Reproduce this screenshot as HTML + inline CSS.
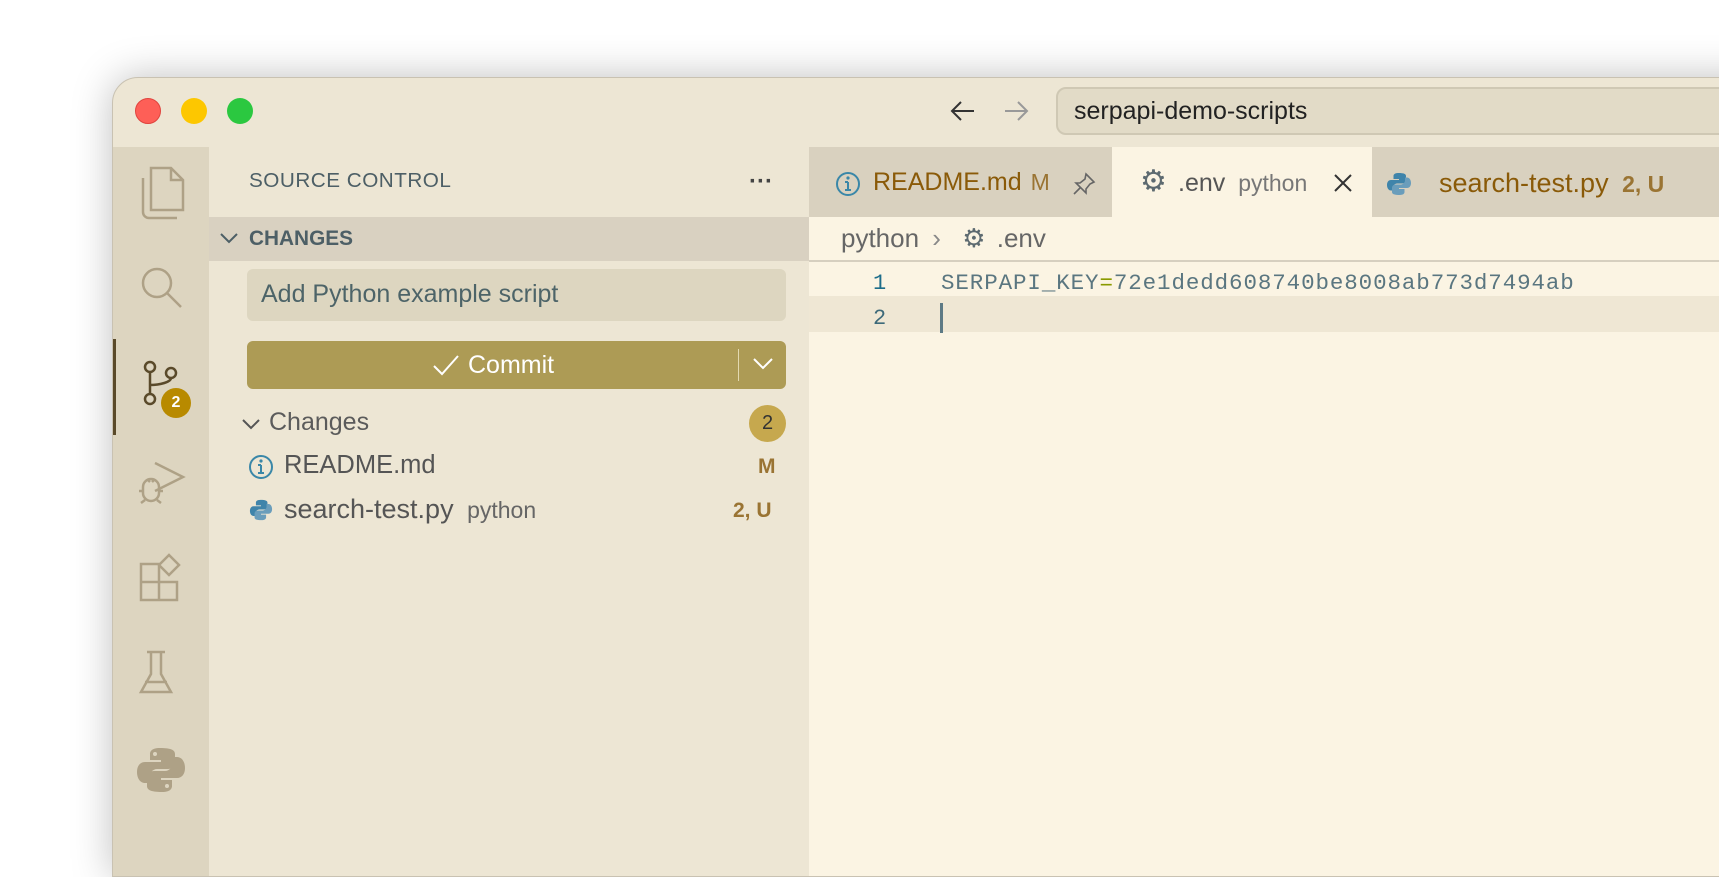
<!DOCTYPE html>
<html><head><meta charset="utf-8"><style>
*{margin:0;padding:0;box-sizing:border-box}
body{width:1719px;height:842px;background:#fff;overflow:hidden;font-family:"Liberation Sans",sans-serif;position:relative}
.win{position:absolute;left:112px;top:77px;width:1700px;height:800px;background:#ede6d4;border-radius:26px 0 0 0;box-shadow:0 0 40px rgba(0,0,0,.25);border:1px solid #c9c2b2;overflow:hidden}
.a{position:absolute;white-space:nowrap}
.dot{position:absolute;top:20px;width:26px;height:26px;border-radius:50%}
</style></head><body>
<div class="win">
 <div class="dot" style="left:22px;background:#fe5f57;border:1px solid #e0443e"></div>
 <div class="dot" style="left:68px;background:#fdc700"></div>
 <div class="dot" style="left:114px;background:#2bc840"></div>
 <svg class="a" style="left:835px;top:20px" width="30" height="26" viewBox="0 0 30 26"><path d="M26 13H4M13 4L4 13l9 9" stroke="#333" stroke-width="2" fill="none"/></svg>
 <svg class="a" style="left:888px;top:20px" width="30" height="26" viewBox="0 0 30 26"><path d="M4 13h22M17 4l9 9-9 9" stroke="#999" stroke-width="2" fill="none"/></svg>
 <div class="a" style="left:943px;top:9px;width:800px;height:48px;background:#e2dbc7;border:2px solid #cfc8b4;border-radius:10px;font-size:25px;color:#222;padding:8px 16px">serpapi-demo-scripts</div>
 <div class="a" style="left:0;top:69px;width:96px;height:740px;background:#ddd5c0"></div>
 <div class="a" style="left:0;top:261px;width:3px;height:96px;background:#5a4a2a"></div>
 <svg class="a" style="left:0;top:69px" width="96" height="680" viewBox="0 0 96 680" fill="none" stroke="#aea186" stroke-width="2.5">
  <path d="M38 21h20l12 12v30H38zM58 21v12h12M30 31v34a6 6 0 0 0 6 6h28"/>
  <circle cx="44" cy="136" r="14"/><path d="M54 146l14 14"/>
  <g stroke="#5a4a2a"><circle cx="37" cy="220" r="5"/><circle cx="58" cy="226" r="5"/><circle cx="37" cy="252" r="5"/><path d="M37 225v22M37 238c10 0 21-3 21-7"/></g>
  <path d="M42 316l28 14-28 14M30 340a8 8 0 0 1 16 0v6a8 8 0 0 1-16 0zM26 344h4M46 344h4M28 356l4-3M48 356l-4-3M34 332l3 3M42 332l-3 3"/>
  <path d="M28 417h18v18H28zM28 435h18v18H28zM46 435h18v18H46zM56 408l10 10-10 10-10-10z"/>
  <path d="M34 505h18M38 505v22l-10 18h30l-10-18v-22M32 535h22"/>
 </svg>
 <svg class="a" style="left:22px;top:666px" width="52" height="52" viewBox="0 0 52 52"><path fill="#aea186" d="M25 4c-9 0-10 4-10 6v6h11v2H10c-5 0-8 4-8 10s3 11 8 11h4v-6c0-4 4-8 8-8h11c4 0 7-3 7-7v-8c0-4-4-6-15-6zm-5 4a2 2 0 1 1 0 4 2 2 0 0 1 0-4zM27 48c9 0 10-4 10-6v-6H26v-2h16c5 0 8-4 8-10s-3-11-8-11h-4v6c0 4-4 8-8 8H19c-4 0-7 3-7 7v8c0 4 4 6 15 6zm5-4a2 2 0 1 1 0-4 2 2 0 0 1 0 4z"/></svg>
 <div class="a" style="left:48px;top:310px;width:30px;height:30px;border-radius:50%;background:#b88a00;color:#fff;font-size:16px;font-weight:bold;text-align:center;line-height:30px">2</div>
 <div class="a" style="left:136px;top:91px;font-size:20.7px;color:#4d5f66;letter-spacing:.5px">SOURCE CONTROL</div>
 <div class="a" style="left:636px;top:90px;font-size:24px;font-weight:bold;color:#444">···</div>
 <div class="a" style="left:96px;top:139px;width:600px;height:44px;background:#d9d1c1"></div>
 <svg class="a" style="left:106px;top:153px" width="20" height="14"><path d="M2 3l8 8 8-8" stroke="#4d5f66" stroke-width="2" fill="none"/></svg>
 <div class="a" style="left:136px;top:149px;font-size:20.8px;font-weight:bold;color:#4d5f66">CHANGES</div>
 <div class="a" style="left:134px;top:191px;width:539px;height:52px;background:#ddd6c0;border-radius:6px;font-size:25px;color:#4d6468;padding:11px 14px">Add Python example script</div>
 <div class="a" style="left:134px;top:263px;width:539px;height:48px;background:#ad9b55;border-radius:6px;color:#fff;font-size:25px">
  <svg class="a" style="left:185px;top:13px" width="28" height="22"><path d="M2 12l8 8L26 2" stroke="#fff" stroke-width="2" fill="none"/></svg>
  <div class="a" style="left:221px;top:10px">Commit</div>
  <div class="a" style="left:491px;top:8px;width:1px;height:32px;background:#e3d9b0"></div>
  <svg class="a" style="left:505px;top:16px" width="22" height="14"><path d="M2 2l9 9 9-9" stroke="#fff" stroke-width="2" fill="none"/></svg>
 </div>
 <svg class="a" style="left:128px;top:339px" width="20" height="14"><path d="M2 3l8 8 8-8" stroke="#555" stroke-width="2" fill="none"/></svg>
 <div class="a" style="left:156px;top:330px;font-size:25px;color:#5b5b5b">Changes</div>
 <div class="a" style="left:636px;top:327px;width:37px;height:37px;border-radius:50%;background:#c6a84e;color:#333;font-size:20px;text-align:center;line-height:37px">2</div>
 <svg class="a" style="left:135px;top:376px" width="26" height="26"><circle cx="13" cy="13" r="11" stroke="#3a87a8" stroke-width="2" fill="none"/><path d="M13 11v8M10 19h6M10 11h3" stroke="#3a87a8" stroke-width="2"/><circle cx="13" cy="7" r="1.6" fill="#3a87a8"/></svg>
 <div class="a" style="left:171px;top:373px;font-size:25.5px;color:#555">README.md</div>
 <div class="a" style="left:645px;top:377px;font-size:21px;font-weight:bold;color:#9a7433">M</div>
 <svg class="a" style="left:136px;top:420px" width="24" height="24" viewBox="0 0 52 52"><path fill="#3f84aa" d="M25 4c-9 0-10 4-10 6v6h11v2H10c-5 0-8 4-8 10s3 11 8 11h4v-6c0-4 4-8 8-8h11c4 0 7-3 7-7v-8c0-4-4-6-15-6z"/><path fill="#6a9dbb" d="M27 48c9 0 10-4 10-6v-6H26v-2h16c5 0 8-4 8-10s-3-11-8-11h-4v6c0 4-4 8-8 8H19c-4 0-7 3-7 7v8c0 4 4 6 15 6z"/></svg>
 <div class="a" style="left:171px;top:416px;font-size:27px;color:#555">search-test.py <span style="font-size:23px;color:#666;margin-left:6px">python</span></div>
 <div class="a" style="left:620px;top:421px;font-size:21px;font-weight:bold;color:#9a7433">2, U</div>
 <div class="a" style="left:696px;top:69px;width:1010px;height:740px;background:#fbf4e3"></div>
 <div class="a" style="left:696px;top:69px;width:1010px;height:70px;background:#d9d1bf"></div>
 <div class="a" style="left:696px;top:69px;width:303px;height:70px;font-size:25px;color:#8a5a08">
  <svg class="a" style="left:26px;top:24px" width="26" height="26"><circle cx="13" cy="13" r="11" stroke="#3a87a8" stroke-width="2" fill="none"/><path d="M13 11v8M10 19h6M10 11h3" stroke="#3a87a8" stroke-width="2"/><circle cx="13" cy="7" r="1.6" fill="#3a87a8"/></svg>
  <div class="a" style="left:64px;top:21px">README.md <span style="color:#9a7433;margin-left:2px;font-size:23px">M</span></div>
  <svg class="a" style="left:262px;top:24px" width="26" height="26"><path d="M15 3l8 8-4 2-4 5 0 4-10-10 4 0 5-4zM9 17l-6 6" stroke="#666" stroke-width="1.6" fill="none"/></svg>
 </div>
 <div class="a" style="left:999px;top:69px;width:260px;height:72px;background:#fbf4e3;font-size:25px;color:#555">
  <div class="a" style="left:28px;top:17px;font-size:30px;color:#5d6a70">⚙</div>
  <div class="a" style="left:66px;top:22px">.env <span style="font-size:23px;color:#777;margin-left:6px">python</span></div>
  <svg class="a" style="left:221px;top:26px" width="20" height="20"><path d="M2 2l16 16M18 2L2 18" stroke="#333" stroke-width="2"/></svg>
 </div>
 <svg class="a" style="left:1273px;top:93px" width="26" height="26" viewBox="0 0 52 52"><path fill="#3f84aa" d="M25 4c-9 0-10 4-10 6v6h11v2H10c-5 0-8 4-8 10s3 11 8 11h4v-6c0-4 4-8 8-8h11c4 0 7-3 7-7v-8c0-4-4-6-15-6z"/><path fill="#6a9dbb" d="M27 48c9 0 10-4 10-6v-6H26v-2h16c5 0 8-4 8-10s-3-11-8-11h-4v6c0 4-4 8-8 8H19c-4 0-7 3-7 7v8c0 4 4 6 15 6z"/></svg>
 <div class="a" style="left:1326px;top:90px;font-size:27px;color:#8a5a08">search-test.py <span style="color:#9a7433;font-size:23px;font-weight:bold;margin-left:6px">2, U</span></div>
 <div class="a" style="left:728px;top:145px;font-size:26px;color:#666">python <span style="color:#888;margin:0 6px">›</span> <span style="color:#5d6a70;font-size:26px;margin-left:8px">⚙</span> <span style="margin-left:4px">.env</span></div>
 <div class="a" style="left:696px;top:182px;width:1010px;height:2px;background:#d6cfbf"></div>
 <div class="a" style="left:696px;top:218px;width:1010px;height:36px;background:#efe7d4"></div>
 <div class="a" style="left:827px;top:225px;width:3px;height:30px;background:#5d7a85"></div>
 <div class="a" style="left:760px;top:188px;font-family:'Liberation Mono',monospace;font-size:22px;color:#1d6d8a;line-height:35px">1<br><span style="color:#3d6a7a">2</span></div>
 <div class="a" style="left:828px;top:188px;font-family:'Liberation Mono',monospace;font-size:22.5px;color:#5a7680;line-height:35px;letter-spacing:.9px">SERPAPI_KEY<span style="color:#8a9a00">=</span>72e1dedd608740be8008ab773d7494ab</div>
</div>
</body></html>
